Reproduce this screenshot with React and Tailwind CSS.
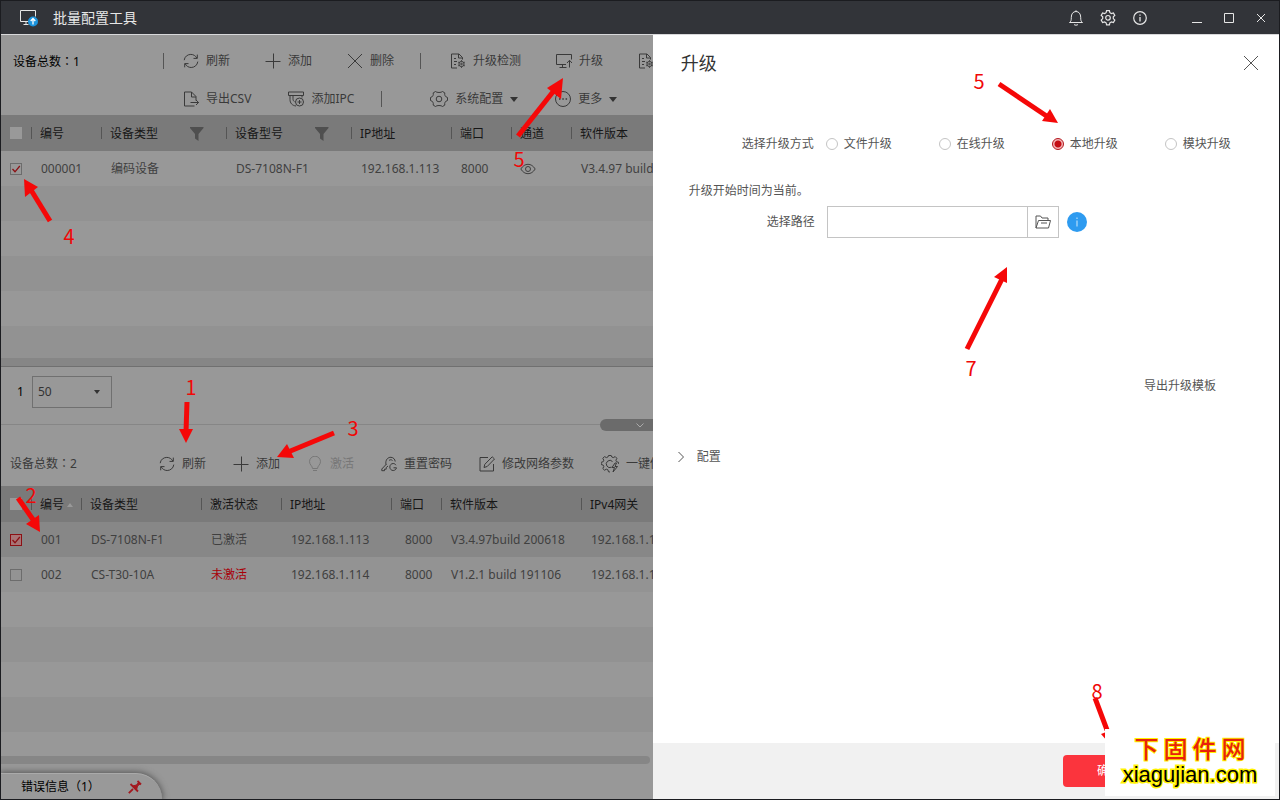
import React from "react";

function Icon({ children, className = "h-4 w-4", box = "0 0 16 16" }) {
  return (
    <svg
      viewBox={box}
      className={`shrink-0 ${className}`}
      fill="none"
      stroke="currentColor"
      strokeWidth="1"
      aria-hidden="true"
    >
      {children}
    </svg>
  );
}

const Refresh = () => (
  <Icon>
    <path d="M1.2 7.2C1.6 3.6 4.6 1.4 7.8 1.4c2.6 0 4.9 1.4 6 3.7M14.3 1.6v3.8h-3.8M14.8 8.6c-.4 3.6-3.4 5.9-6.6 5.9-2.6 0-4.9-1.4-6-3.7M1.7 14.3v-3.7h3.8" />
  </Icon>
);
const Plus = () => (
  <Icon>
    <path d="M8.5 .5v15M.5 8.5h15" />
  </Icon>
);
const Cross = () => (
  <Icon>
    <path d="M1 1l14 14M15 1L1 15" />
  </Icon>
);
const DocGear = () => (
  <Icon>
    <path d="M7 15H1.500V1h7.500l3.500 3.500v2M8.500 1v4h4M4 5.500h2M4 8.500h3M4 11.500h2" />
    <circle cx="11.500" cy="11" r="2.600" />
    <circle cx="11.500" cy="11" r=".8" />
    <path d="M11.500 7.200v1.200M11.500 13.600v1.200M8.200 9.100l1 .6M13.800 12.300l1 .6M8.200 12.900l1-.6M13.800 9.700l1-.6" />
  </Icon>
);
const ScreenUp = () => (
  <Icon>
    <path d="M10 11.500H.5v-10h15v5M6.500 11.500v3M3.500 14.500h7M13.500 14.500v-7M11 10l2.500-2.700L16 10" />
  </Icon>
);
const DocOut = () => (
  <Icon>
    <path d="M11.500 15H1.500V1h7l4.500 4.500v4M8.500 1v5h4.500M7.500 11.500h8M13 9l2.600 2.500L13 14" />
  </Icon>
);
const CameraAdd = () => (
  <Icon>
    <path d="M.5 1h15v3.500H.5zM2 4.500v4c0 3.500 2 6 6 6.500M5 4.500v3.200c0 1.500.6 2.500 1.500 3M14 4.500v2" />
    <circle cx="11.500" cy="11" r="4" />
    <path d="M11.500 9v4M9.500 11h4" />
  </Icon>
);
const Hexagon = () => (
  <Icon className="h-[18px] w-[18px]" box="0 0 18 18">
    <path d="M5.500 1.500c1 1.300 6 1.300 7 0l2.300 1.400c-.6 2 .6 4.200 2.700 4.600v3c-2.100.4-3.300 2.600-2.700 4.600l-2.300 1.400c-1-1.300-6-1.300-7 0l-2.300-1.400c.6-2-.6-4.200-2.700-4.600v-3c2.100-.4 3.300-2.600 2.700-4.600z" />
    <circle cx="9" cy="9" r="2.800" />
  </Icon>
);
const More = () => (
  <Icon>
    <circle cx="8" cy="8" r="7.500" />
    <path d="M4 8h1.500M7.300 8h1.500M10.600 8h1.500" strokeWidth="1.500" />
  </Icon>
);
const Bulb = () => (
  <Icon>
    <path d="M5.500 12.500c0-2.500-3-3.700-3-6.800a5.500 5.500 0 0 1 11 0c0 3.100-3 4.300-3 6.800zM6 14.500h4" />
  </Icon>
);
const KeyReset = () => (
  <Icon>
    <path d="M5 8.500C4 4 7 1 10 1.300c2.500.2 4 2 4.200 4.200M5.500 8L.8 13v1.700h2.700v-1.500h1.700v-1.600L7 10M8 4.500c1-1 2.500-1 3.500 0" />
    <path d="M15 9.200c-.6-1-1.600-1.700-2.800-1.700-2 0-3.400 1.600-3.400 3.500s1.400 3.500 3.400 3.500c1.600 0 3-1.100 3.300-2.700h-3" />
  </Icon>
);
const Edit = () => (
  <Icon>
    <path d="M9 1.500H1v13.500h13.500V8M5 11.500l.8-3.200L13.200.8l2.300 2.200-7.300 7.500z" />
  </Icon>
);
const GearBolt = () => (
  <Icon className="h-[18px] w-[18px]" box="0 0 18 18">
    <path d="M9 17l-1.500-.2-.6-2-1.500-.6-1.900 1-1.700-1.700 1-1.900-.6-1.500-2-.6V7.300l2-.6.6-1.500-1-1.900 1.700-1.700 1.900 1 1.500-.6.6-1.500h2.700l.6 1.500 1.500.6 1.900-1 1.700 1.700-1 1.900.6 1.500 2 .6v1.500" />
    <path d="M11.500 6.500a3.600 3.600 0 1 0-1 5.700M14 8l-3 4.500h2.500L12 17l4.500-5.500H14L15.500 8z" />
  </Icon>
);
const Eye = () => (
  <Icon>
    <path d="M.8 8C2.800 4.800 5.300 3.300 8 3.300S13.200 4.800 15.200 8C13.200 11.200 10.700 12.700 8 12.700S2.800 11.200.8 8z" />
    <circle cx="8" cy="8" r="2.500" />
  </Icon>
);
const Filter = () => (
  <svg viewBox="0 0 14 14" className="h-3.5 w-3.5 shrink-0" fill="#4f4f4f" aria-hidden="true">
    <path d="M0 0h13.500v1L8.500 7v7L5 11.500V7L0 1z" />
  </svg>
);
const Caret = () => (
  <svg viewBox="0 0 8 5" className="h-[5px] w-2 shrink-0" fill="#333" aria-hidden="true">
    <path d="M0 0h8L4 5z" />
  </svg>
);

function Tool({ icon, children, disabled, caret }) {
  return (
    <button
      type="button"
      disabled={disabled}
      className="flex shrink-0 items-center gap-[7px] text-[#3a3a3a] disabled:text-[#777]"
    >
      {icon}
      {children && <span>{children}</span>}
      {caret && <Caret />}
    </button>
  );
}

const Bar = ({ className }) => <span className={`h-4 w-px shrink-0 bg-[#555] ${className}`} />;

const Total = ({ count }) => (
  <span>
    设备总数<span className="font-['Noto_Sans_CJK_TC',sans-serif]">：</span>{count}
  </span>
);

function Check({ label, checked, look = "border-[#6c6c6c]" }) {
  return (
    <span className="relative flex h-3 w-3">
      <input
        type="checkbox"
        aria-label={label}
        defaultChecked={checked}
        className={`peer h-3 w-3 appearance-none border ${look}`}
      />
      <svg
        viewBox="0 0 12 12"
        className="pointer-events-none absolute inset-0 hidden h-3 w-3 peer-checked:block"
        fill="none"
        stroke="#8c1014"
        strokeWidth="1.300"
        aria-hidden="true"
      >
        <path d="M2.500 6l2.500 2.800L9.800 3" />
      </svg>
    </span>
  );
}

function Th({ children }) {
  return (
    <th className="p-0 text-left font-normal">
      <div className="flex h-9 items-center">
        <span className="h-3 w-px shrink-0 bg-[#555]" />
        <div className="flex flex-1 items-center pl-2 pt-0.5">{children}</div>
      </div>
    </th>
  );
}

function Td({ children, className = "pl-[10px]" }) {
  return <td className={`h-[35px] whitespace-nowrap p-0 ${className}`}>{children}</td>;
}

const Stripe = ({ className }) => <div className={className} />;

function TopTable() {
  return (
    <table className="w-full table-fixed border-collapse">
      <colgroup>
        <col className="w-[30px]" />
        <col className="w-[70px]" />
        <col className="w-[125px]" />
        <col className="w-[125px]" />
        <col className="w-[100px]" />
        <col className="w-[60px]" />
        <col className="w-[60px]" />
        <col />
      </colgroup>
      <thead className="bg-[#7a7a7a] text-[#161616]">
        <tr>
          <th className="p-0 pl-[9px]">
            <Check label="全选" look="border-[#999] bg-[#999]" />
          </th>
          <Th>编号</Th>
          <Th>
            设备类型
            <span className="ml-auto mr-[22px]"><Filter /></span>
          </Th>
          <Th>
            设备型号
            <span className="ml-auto mr-[22px]"><Filter /></span>
          </Th>
          <Th>IP地址</Th>
          <Th>端口</Th>
          <Th>通道</Th>
          <Th><span className="whitespace-nowrap">软件版本</span></Th>
        </tr>
      </thead>
      <tbody className="bg-[#989898] text-[#404040]">
        <tr>
          <Td className="pl-[9px]"><Check label="选择 000001" checked /></Td>
          <Td>000001</Td>
          <Td>编码设备</Td>
          <Td>DS-7108N-F1</Td>
          <Td>192.168.1.113</Td>
          <Td>8000</Td>
          <Td className="pl-[9px]"><Eye /></Td>
          <Td>V3.4.97 build 200618</Td>
        </tr>
      </tbody>
    </table>
  );
}

function BottomTable() {
  return (
    <table className="w-full table-fixed border-collapse">
      <colgroup>
        <col className="w-[30px]" />
        <col className="w-[50px]" />
        <col className="w-[120px]" />
        <col className="w-[80px]" />
        <col className="w-[110px]" />
        <col className="w-[50px]" />
        <col className="w-[140px]" />
        <col />
      </colgroup>
      <thead className="bg-[#7a7a7a] text-[#161616]">
        <tr>
          <th className="p-0 pl-[9px]">
            <Check label="全选" look="border-[#999] bg-[#999]" />
          </th>
          <Th>
            编号
            <svg viewBox="0 0 6 4" className="ml-[3px] h-1 w-1.5" fill="#999" aria-hidden="true">
              <path d="M0 4l3-4 3 4z" />
            </svg>
          </Th>
          <Th>设备类型</Th>
          <Th>激活状态</Th>
          <Th>IP地址</Th>
          <Th>端口</Th>
          <Th>软件版本</Th>
          <Th><span className="whitespace-nowrap">IPv4网关</span></Th>
        </tr>
      </thead>
      <tbody className="text-[#404040]">
        <tr className="bg-[#878787]">
          <Td className="pl-[9px]">
            <Check label="选择 001" checked look="border-[#8c1014] bg-[#a87476]" />
          </Td>
          <Td>001</Td>
          <Td>DS-7108N-F1</Td>
          <Td>已激活</Td>
          <Td>192.168.1.113</Td>
          <Td className="pl-3.5">8000</Td>
          <Td>V3.4.97build 200618</Td>
          <Td>192.168.1.1</Td>
        </tr>
        <tr className="bg-[#939393]">
          <Td className="pl-[9px]"><Check label="选择 002" /></Td>
          <Td>002</Td>
          <Td>CS-T30-10A</Td>
          <Td className="pl-[10px] text-[#a80008]">未激活</Td>
          <Td>192.168.1.114</Td>
          <Td className="pl-3.5">8000</Td>
          <Td>V1.2.1 build 191106</Td>
          <Td>192.168.1.1</Td>
        </tr>
      </tbody>
    </table>
  );
}

function TitleBar() {
  return (
    <header className="flex h-[34px] shrink-0 items-center border-b border-[#d8d8da] bg-[#323439] pl-[19px] text-[#e6e6e6]">
      <svg viewBox="0 0 19 18" className="h-[18px] w-[19px]" fill="none" aria-hidden="true">
        <path d="M9 12.500H.5V1.500h15v6M6 12.500v2.500M3.500 15.500h5" stroke="#e6e6e6" />
        <circle cx="13" cy="12.500" r="5" fill="#1b93dd" />
        <path d="M13 15.500v-5.500M10.700 12l2.300-2.500 2.300 2.500" stroke="#fff" strokeWidth="1.300" />
      </svg>
      <h1 className="ml-3.5 flex-1 text-sm">批量配置工具</h1>
      <div className="flex items-center gap-4">
        <button type="button" aria-label="通知">
          <Icon>
            <path d="M1.500 12.500c1.500-1 1.800-2 1.800-5.200C3.300 4 5 1.500 8 1.500s4.700 2.500 4.700 5.800c0 3.200.3 4.200 1.800 5.200zM6 14.500c1 .9 3 .9 4 0M8 .3v1.200" />
          </Icon>
        </button>
        <button type="button" aria-label="设置">
          <Icon>
            <path d="M6.600.7h2.800l.5 2 1.500.9 2-.6 1.400 2.400-1.500 1.400v1.800l1.500 1.500-1.400 2.400-2-.6-1.500.9-.5 2H6.600l-.5-2-1.500-.9-2 .6-1.400-2.400 1.500-1.500V6.800L1.200 5.400 2.600 3l2 .6 1.500-.9z" strokeWidth="1.200" />
            <circle cx="8" cy="7.800" r="2.300" strokeWidth="1.200" />
          </Icon>
        </button>
        <button type="button" aria-label="关于">
          <Icon>
            <circle cx="8" cy="8" r="6.300" strokeWidth="1.200" />
            <path d="M8 7v4.500M8 4.500v1.300" strokeWidth="1.300" />
          </Icon>
        </button>
      </div>
      <div className="ml-[43px] mr-3 flex items-center gap-5">
        <button type="button" aria-label="最小化">
          <Icon className="h-3 w-3" box="0 0 12 12"><path d="M1 10.500h10" /></Icon>
        </button>
        <button type="button" aria-label="最大化">
          <Icon className="h-3 w-3" box="0 0 12 12"><path d="M1.500 1.500h9v9h-9z" /></Icon>
        </button>
        <button type="button" aria-label="关闭">
          <Icon className="h-3 w-3" box="0 0 12 12"><path d="M2 2l8 8M10 2l-8 8" /></Icon>
        </button>
      </div>
    </header>
  );
}

function Workspace() {
  return (
    <main className="flex min-w-0 flex-1 flex-col overflow-hidden bg-[#989898]">
      <section>
        <div className="flex pt-2.5">
          <p className="flex h-8 w-[162px] shrink-0 items-center pl-3 text-black"><Total count="1" /></p>
          <div className="flex flex-col gap-1.5">
            <div className="flex h-8 items-center">
              <Bar className="mr-[19px]" />
              <div className="flex gap-[35px]">
                <Tool icon={<Refresh />}>刷新</Tool>
                <Tool icon={<Plus />}>添加</Tool>
                <Tool icon={<Cross />}>删除</Tool>
              </div>
              <Bar className="ml-[27px] mr-[29px]" />
              <div className="flex gap-[35px]">
                <Tool icon={<DocGear />}>升级检测</Tool>
                <Tool icon={<ScreenUp />}>升级</Tool>
                <Tool icon={<DocGear />} />
              </div>
            </div>
            <div className="flex h-8 items-center pl-5">
              <div className="flex gap-[37px]">
                <Tool icon={<DocOut />}>导出CSV</Tool>
                <Tool icon={<CameraAdd />}>添加IPC</Tool>
              </div>
              <Bar className="ml-[27px] mr-12" />
              <div className="flex gap-[37px]">
                <Tool icon={<Hexagon />} caret>系统配置</Tool>
                <Tool icon={<More />} caret>更多</Tool>
              </div>
            </div>
          </div>
        </div>
        <TopTable />
        <Stripe className="h-[35px] bg-[#929292]" />
        <Stripe className="h-[35px]" />
        <Stripe className="h-[35px] bg-[#929292]" />
        <Stripe className="h-[35px]" />
        <Stripe className="h-8 bg-[#929292]" />
        <div className="h-[9px] border-b border-[#707070] bg-[#868686]" />
        <div className="flex h-[57px] items-center gap-2 pb-[7px] pl-4 text-black">
          <span>1</span>
          <div className="relative flex items-center">
            <select
              aria-label="每页条数"
              className="h-8 w-20 appearance-none border border-[#707070] bg-transparent pl-[5px] text-[#333]"
            >
              <option>50</option>
            </select>
            <svg viewBox="0 0 6 4" className="pointer-events-none absolute right-3 h-1 w-1.5" fill="#333" aria-hidden="true">
              <path d="M0 0h6L3 4z" />
            </svg>
          </div>
        </div>
      </section>

      <section className="relative flex flex-1 flex-col border-t border-[#868686]">
        <button
          type="button"
          aria-label="收起"
          className="absolute -top-1.5 right-0 flex h-3 w-[53px] items-center justify-center rounded-l-md bg-[#6b6b6b] pl-7 text-[#aaa]"
        >
          <Icon className="h-2 w-2" box="0 0 8 8"><path d="M.5 2.500L4 6l3.500-3.500" /></Icon>
        </button>
        <div className="flex h-[61px] items-center pt-4">
          <p className="w-[149px] shrink-0 pl-[9px] text-[#3a3a3a]"><Total count="2" /></p>
          <div className="ml-[9px] flex gap-[27px] whitespace-nowrap">
            <Tool icon={<Refresh />}>刷新</Tool>
            <Tool icon={<Plus />}>添加</Tool>
            <Tool icon={<Bulb />} disabled>激活</Tool>
            <Tool icon={<KeyReset />}>重置密码</Tool>
            <Tool icon={<Edit />}>修改网络参数</Tool>
            <Tool icon={<GearBolt />}>一键修改</Tool>
          </div>
        </div>
        <BottomTable />
        <Stripe className="h-[35px]" />
        <Stripe className="h-[35px] bg-[#929292]" />
        <Stripe className="h-[35px]" />
        <Stripe className="h-[35px] bg-[#929292]" />
        <div className="mr-[3px] mt-6 h-2 rounded-r-full bg-[#868686]" />
        <div className="mt-auto flex">
          <div className="flex h-[26px] items-center rounded-tr-[26px] border-t border-[#aaa] bg-[#999] pl-5 pr-5 text-black shadow-[0_0_6px_1px_#555]">
            <span className="w-[107px]">错误信息（1）</span>
            <button type="button" aria-label="固定">
              <svg viewBox="0 0 14 14" className="h-3.5 w-3.5" fill="#a3191f" stroke="#a3191f" aria-hidden="true">
                <path d="M.8 13.200L5 9M2.500 4l7.500 7.500M9.500 1l3.500 3.500" strokeWidth="1.800" fill="none" />
                <path d="M4.500 6l4-1 2-2.500 1.500 1.500-2.500 2-1 4z" />
              </svg>
            </button>
          </div>
        </div>
      </section>
    </main>
  );
}

function Radio({ children, checked }) {
  return (
    <label className="flex items-center gap-1.5">
      <input
        type="radio"
        name="mode"
        defaultChecked={checked}
        className="h-3 w-3 appearance-none rounded-full border border-[#c4c4c4] checked:border-[#b3161c] checked:bg-[radial-gradient(circle,#c40d14_0_3px,#f3b6b8_4px)]"
      />
      {children}
    </label>
  );
}

function UpgradePanel() {
  return (
    <aside className="flex w-[49%] shrink-0 flex-col bg-white text-[#555]">
      <div className="flex items-center justify-between pl-7 pr-5 pt-[18px]">
        <h2 className="text-lg leading-5 text-[#333]">升级</h2>
        <button type="button" aria-label="关闭面板" className="text-[#555]"><Cross /></button>
      </div>
      <form className="flex flex-1 flex-col">
        <fieldset className="mt-[63px] flex items-center">
          <legend className="sr-only">选择升级方式</legend>
          <span className="w-[173px] pr-3 text-right">选择升级方式</span>
          <div className="flex gap-[47px]">
            <Radio>文件升级</Radio>
            <Radio>在线升级</Radio>
            <Radio checked>本地升级</Radio>
            <Radio>模块升级</Radio>
          </div>
        </fieldset>
        <p className="mt-[31px] pl-9">升级开始时间为当前。</p>
        <div className="mt-[7px] flex items-center">
          <label htmlFor="path" className="w-[174px] pr-3 text-right">选择路径</label>
          <div className="flex h-8 border border-[#c4c4c4]">
            <input id="path" type="text" className="w-[199px] px-2 outline-none" />
            <button type="button" aria-label="浏览" className="flex w-[31px] items-center justify-center border-l border-[#c4c4c4]">
              <Icon>
                <path d="M1 14V2h4.500l1.500 2h6v2.500M1 14L3.500 6.500h12L13.500 14zM6 9h6" />
              </Icon>
            </button>
          </div>
          <button
            type="button"
            aria-label="说明"
            className="ml-2 flex h-5 w-5 items-center justify-center rounded-full bg-[#2e9bf0] text-[#b5dcfa]"
          >
            <Icon className="h-3 w-3" box="0 0 12 12">
              <path d="M6 4.500v6M6 1.500V3" strokeWidth="1.200" />
            </Icon>
          </button>
        </div>
        <a href="#template" className="mr-[63px] mt-[140px] self-end">导出升级模板</a>
        <button type="button" className="ml-6 mt-[55px] flex items-center gap-3 self-start">
          <Icon className="h-2 w-2 overflow-visible" box="0 0 8 8"><path d="M1.500 -1L6.500 4l-5 5" /></Icon>
          配置
        </button>
        <footer className="mt-auto flex h-14 items-center justify-end bg-[#f1f1f1] pr-[124px]">
          <button type="submit" className="h-8 w-[92px] rounded-sm bg-[#fb343d] text-white">确定</button>
        </footer>
      </form>
    </aside>
  );
}

function Step({ n, className }) {
  return <span className={`absolute w-3 text-center text-xl leading-5 ${className}`}>{n}</span>;
}

function Annotations() {
  return (
    <div className="pointer-events-none absolute -left-px -top-px font-['Noto_Sans_CJK_SC',sans-serif] text-[#f00808]">
      <svg viewBox="0 0 1280 800" className="h-[800px] w-[1280px] max-w-none" aria-hidden="true">
        <g stroke="#f50808" strokeWidth="5" fill="#f50808">
          <path d="M50 221L31 190" />
          <path d="M518 136L556 88" />
          <path d="M187 402L186 432" />
          <path d="M334 433L288 452" />
          <path d="M18 498L34 521" />
          <path d="M999 84L1048 117" />
          <path d="M967 349L1002 279" />
          <path d="M1095 698L1107 730" />
        </g>
        <g fill="#f50808">
          <path d="M24 179L38 187L25 197z" />
          <path d="M563 78L561 99L547 88z" />
          <path d="M186 443L179 429L193 429z" />
          <path d="M277 457L287 444L294 458z" />
          <path d="M40 532L26 524L39 515z" />
          <path d="M1058 123L1042 121L1050 109z" />
          <path d="M1007 267L1007 283L994 277z" />
          <path d="M1101 734L1114 729L1108 742z" />
        </g>
      </svg>
      <Step n="1" className="left-[185px] top-[377px]" />
      <Step n="2" className="left-[25px] top-[485px]" />
      <Step n="3" className="left-[347px] top-[418px]" />
      <Step n="4" className="left-[63px] top-[226px]" />
      <Step n="5" className="left-[513px] top-[149px]" />
      <Step n="5" className="left-[973px] top-[71px]" />
      <Step n="7" className="left-[965px] top-[358px]" />
      <Step n="8" className="left-[1091px] top-[681px]" />
    </div>
  );
}

function Watermark() {
  return (
    <div className="absolute bottom-[3px] right-1 flex h-[67px] w-[170px] flex-col items-center bg-white pt-1">
      <p className="flex gap-[5px] font-['Noto_Sans_CJK_SC',sans-serif] text-2xl font-medium leading-[30px] text-[#e8220c] [-webkit-text-stroke:2px_#fff200] [paint-order:stroke_fill]">
        <span>下</span>
        <span>固</span>
        <span>件</span>
        <span>网</span>
      </p>
      <p className="font-['Liberation_Sans',sans-serif] text-[22px] leading-6 text-black [-webkit-text-stroke:3px_#fff200] [paint-order:stroke_fill]">
        xiagujian.com
      </p>
    </div>
  );
}

export default function App() {
  return (
    <div className="relative flex min-h-screen flex-col overflow-hidden border border-[#1b1c20] font-['Noto_Sans','Noto_Sans_CJK_SC',sans-serif] text-xs">
      <TitleBar />
      <div className="flex flex-1">
        <Workspace />
        <UpgradePanel />
      </div>
      <Annotations />
      <Watermark />
    </div>
  );
}
